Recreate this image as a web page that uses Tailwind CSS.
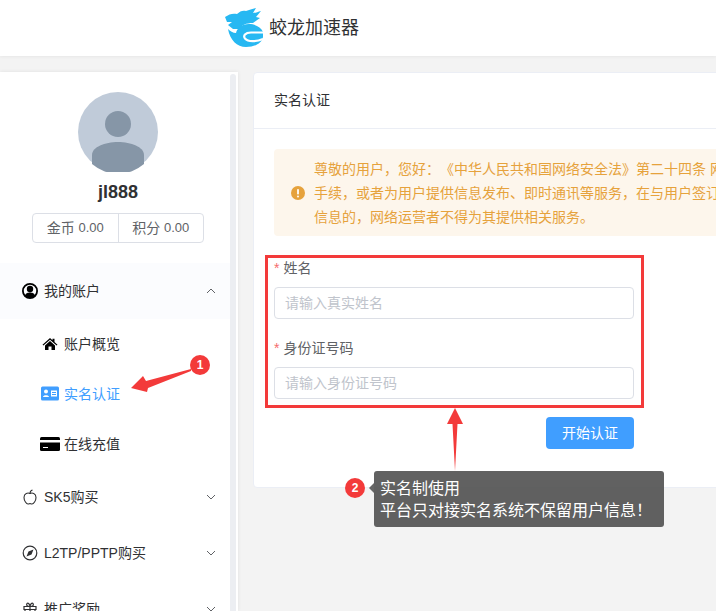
<!doctype html>
<html lang="zh-CN">

<head>
  <meta charset="UTF-8" />
  <title>蛟龙加速器</title>
  <script src="https://cdn.jsdelivr.net/npm/@tailwindcss/browser@4"></script>
</head>

<body class="bg-[#f3f3f3] font-['Liberation_Sans','Noto_Sans_CJK_SC',sans-serif] text-[14px] text-[#303133]">
  <div class="relative h-[611px] w-[716px] overflow-hidden">

    <!-- header -->
    <header class="flex h-[56px] items-center bg-white pl-[225px] shadow-[0_1px_3px_rgba(0,0,0,0.05)]">
      <svg class="h-[40px] w-[40px]" viewBox="0 0 40 40" fill="#27b8f2">
        <path d="M0 9 C4 6 8 5 12 6 C15 3 18 2 21 3 C24 2 27 1 31 0 L28 5 C30 5 33 4 36 3 L31 9 L35 10 L28 15 C21 15 17 17 14 21 L8 21 L3 17 L7 14 L2 14 Z" />
        <path d="M3 21 C5 32 12 39 21 39 C30 39 37 35 38 29 L38 24 C36 19 30 16 24 16 C17 16 12 20 11 25 C8 25 5 23 3 21 Z" />
        <path d="M38 24.500 H26 C20 24.500 18 28 20 30.500 C23 34 31 34 38 31" fill="none" stroke="#fff" stroke-width="2.200" />
      </svg>
      <span class="ml-[4px] text-[18px] text-[#303133]">蛟龙加速器</span>
    </header>

    <div class="mt-[16px] flex items-start gap-[15px]">
      <!-- sidebar -->
      <aside class="flex h-[539px] w-[238px] shrink-0 bg-white shadow-[0_0_4px_rgba(0,0,0,0.08)]">
        <div class="w-[230px] shrink-0 overflow-hidden">
          <div class="flex flex-col items-center pt-[20px] pl-[6px]">
            <svg class="h-[80px] w-[80px]" viewBox="0 0 80 80">
              <circle cx="40" cy="40" r="40" fill="#c0cbd9" />
              <circle cx="40" cy="32" r="13" fill="#8696a7" />
              <path d="M14 72 V63 C14 55 27 50 40 50 C53 50 66 55 66 63 V72 A40 40 0 0 1 14 72 Z" fill="#8696a7" />
            </svg>
            <div class="mt-[8px] text-[18px] leading-[24px] font-bold text-[#303133]">jl888</div>
            <div class="mt-[9px] flex h-[30px] w-[172px] rounded-[4px] border border-[#dcdfe6] text-[#606266]">
              <div class="flex flex-1 items-center justify-center border-r border-[#dcdfe6]">金币&nbsp;<span class="text-[13px]">0.00</span></div>
              <div class="flex flex-1 items-center justify-center">积分&nbsp;<span class="text-[13px]">0.00</span></div>
            </div>
          </div>

          <nav class="mt-[20px]">
            <div class="flex h-[56px] items-center bg-[#fbfcfe] pr-[14px] pl-[22px]">
              <svg class="mr-[6px] h-[16px] w-[16px]" viewBox="0 0 16 16">
                <circle cx="8" cy="8" r="7.100" fill="none" stroke="#000" stroke-width="1.800" />
                <circle cx="8" cy="6" r="3.200" fill="#000" />
                <path d="M2.800 13 C3.500 10 6 9.500 8 9.500 C10 9.500 12.500 10 13.200 13 C11 15.500 5 15.500 2.800 13 Z" fill="#000" />
              </svg>
              <span class="flex-1">我的账户</span>
              <svg class="h-[10px] w-[10px]" viewBox="0 0 10 10" fill="none" stroke="#606266"><path d="M1 7 L5 3 L9 7" /></svg>
            </div>

            <div class="flex h-[50px] items-center pl-[42px]">
              <svg class="mr-[6px] h-[16px] w-[16px]" viewBox="0 0 16 16" fill="#000">
                <path d="M8 2 L10.500 4.200 V2.800 H12.500 V6 L15.500 8.700 L14.600 9.600 L8 3.800 L1.400 9.600 L0.500 8.700 Z" />
                <path d="M8 5 L13 9.400 V14 H9.500 V10.500 H6.500 V14 H3 V9.400 Z" />
              </svg>
              <span>账户概览</span>
            </div>
            <div class="flex h-[50px] items-center pl-[41px] text-[#409eff]">
              <svg class="mr-[5px] h-[18px] w-[18px]" viewBox="0 0 18 18">
                <rect y="1.500" width="18" height="14" rx="1.500" fill="#409eff" />
                <circle cx="5" cy="6.500" r="2" fill="#fff" />
                <path d="M2 12 C2 9.500 8 9.500 8 12 Z" fill="#fff" />
                <path d="M10 5.500 H16 V11.500 H10 Z M11 7 V8 H15 V7 Z M11 9 V10 H15 V9 Z" fill="#fff" fill-rule="evenodd" />
              </svg>
              <span>实名认证</span>
            </div>
            <div class="flex h-[50px] items-center pl-[40px]">
              <svg class="mr-[4px] h-[20px] w-[20px]" viewBox="0 0 20 20">
                <rect y="3" width="20" height="14" rx="1.500" fill="#000" />
                <rect y="6" width="20" height="2.500" fill="#fff" />
                <rect x="3" y="13" width="5" height="1" fill="#fff" />
              </svg>
              <span>在线充值</span>
            </div>

            <div class="flex h-[56px] items-center pr-[14px] pl-[22px]">
              <svg class="mr-[6px] h-[16px] w-[16px]" viewBox="0 0 16 16" fill="none" stroke="#303133" stroke-width="1.100">
                <path d="M8 4.500 C6 3.500 2 4 2 8.500 C2 12 4.500 15 6 15 C7 15 7.300 14.600 8 14.600 C8.700 14.600 9 15 10 15 C11.500 15 14 12 14 8.500 C14 4 10 3.500 8 4.500 Z" />
                <path d="M8 4.500 C8 3 9 1.500 10.500 1" />
              </svg>
              <span class="flex-1">SK5购买</span>
              <svg class="h-[10px] w-[10px]" viewBox="0 0 10 10" fill="none" stroke="#606266"><path d="M1 3 L5 7 L9 3" /></svg>
            </div>
            <div class="flex h-[56px] items-center pr-[14px] pl-[22px]">
              <svg class="mr-[6px] h-[16px] w-[16px]" viewBox="0 0 16 16">
                <circle cx="8" cy="8" r="6.800" fill="none" stroke="#303133" stroke-width="1.200" />
                <path d="M11.500 4.500 L9.500 9.500 L6.500 6.500 Z M4.500 11.500 L6.500 6.500 L9.500 9.500 Z" fill="#303133" />
              </svg>
              <span class="flex-1">L2TP/PPTP购买</span>
              <svg class="h-[10px] w-[10px]" viewBox="0 0 10 10" fill="none" stroke="#606266"><path d="M1 3 L5 7 L9 3" /></svg>
            </div>
            <div class="flex h-[56px] items-center pr-[14px] pl-[22px]">
              <svg class="mr-[6px] h-[16px] w-[16px]" viewBox="0 0 16 16" fill="none" stroke="#303133" stroke-width="1.200">
                <path d="M2 5.500 H14 V8.500 H2 Z M3 8.500 V15 H13 V8.500 M8 5.500 V15" />
                <path d="M8 5.500 C5 5.500 4 4 5 2.500 C6 1.500 8 3 8 5.500 C8 3 10 1.500 11 2.500 C12 4 11 5.500 8 5.500 Z" />
              </svg>
              <span class="flex-1">推广奖励</span>
              <svg class="h-[10px] w-[10px]" viewBox="0 0 10 10" fill="none" stroke="#606266"><path d="M1 3 L5 7 L9 3" /></svg>
            </div>
          </nav>
        </div>
        <div class="mt-[2px] h-full w-[6px] rounded-[3px] bg-[#eceef2]"></div>
      </aside>

      <!-- main card -->
      <main class="h-[416px] w-[480px] shrink-0 rounded-[4px] border border-[#ebeef5] bg-white">
        <div class="flex h-[56px] items-center border-b border-[#ebeef5] pl-[20px]">实名认证</div>
        <div class="pt-[20px] pl-[20px]">
          <div class="flex h-[87px] w-[480px] items-center rounded-[4px] bg-[#fdf6ec] pl-[17px] text-[#e6a23c]">
            <svg class="mr-[9px] h-[14px] w-[14px] shrink-0" viewBox="0 0 14 14">
              <circle cx="7" cy="7" r="7" fill="#e6a23c" />
              <rect x="6" y="3" width="2" height="5.500" rx="0.800" fill="#fdf6ec" />
              <circle cx="7" cy="10.500" r="1.100" fill="#fdf6ec" />
            </svg>
            <div class="leading-[24px] whitespace-nowrap [text-spacing-trim:space-all]">
              <div>尊敬的用户，您好：《中华人民共和国网络安全法》第二十四条 网络运营者为用户办理</div>
              <div>手续，或者为用户提供信息发布、即时通讯等服务，在与用户签订协议或者确认提供服务</div>
              <div>信息的，网络运营者不得为其提供相关服务。</div>
            </div>
          </div>

          <form class="mt-[17px] w-[360px] text-[#606266]">
            <label class="mb-[4px] flex h-[30px] items-center"><span class="mr-[4px] text-[#f56c6c]">*</span>姓名</label>
            <input type="text" placeholder="请输入真实姓名" class="block h-[32px] w-full rounded-[4px] border border-[#dcdfe6] px-[10px] placeholder:text-[#c0c4cc]" />
            <label class="mt-[14px] mb-[4px] flex h-[30px] items-center"><span class="mr-[4px] text-[#f56c6c]">*</span>身份证号码</label>
            <input type="text" placeholder="请输入身份证号码" class="block h-[32px] w-full rounded-[4px] border border-[#dcdfe6] px-[10px] placeholder:text-[#c0c4cc]" />
            <div class="mt-[18px] flex justify-end">
              <button type="button" class="h-[32px] w-[88px] rounded-[4px] bg-[#409eff] text-white">开始认证</button>
            </div>
          </form>
        </div>
      </main>
    </div>

    <!-- annotations drawn over the page -->
    <div class="absolute top-[255px] left-[265px] h-[153px] w-[379px] border-[3px] border-[#f33a3a]"></div>

    <svg class="absolute top-0 left-0 h-[611px] w-[716px]" viewBox="0 0 716 611" fill="#f33a3a">
      <path d="M455 408 L463 424 L457.500 424 L455 471 L452.500 424 L447 424 Z" />
      <path d="M131 388 L143 376 L146 381 L191 369 L191 371 L148 388 L147 392 Z" />
      <circle cx="200" cy="365" r="10" />
      <circle cx="355" cy="488" r="10" />
      <path d="M369 488 L374 483 V493 Z" fill="#666" />
    </svg>
    <div class="absolute top-[355px] left-[190px] flex h-[20px] w-[20px] items-center justify-center text-[12px] font-bold text-white">1</div>
    <div class="absolute top-[478px] left-[345px] flex h-[20px] w-[20px] items-center justify-center text-[12px] font-bold text-white">2</div>

    <div class="absolute top-[471px] left-[374px] h-[56px] w-[290px] rounded-[3px] bg-[#505050]/90 pt-[7px] pl-[6px] text-[16px] leading-[22px] text-white">
      <div>实名制使用</div>
      <div>平台只对接实名系统不保留用户信息！</div>
    </div>
  </div>
</body>

</html>
